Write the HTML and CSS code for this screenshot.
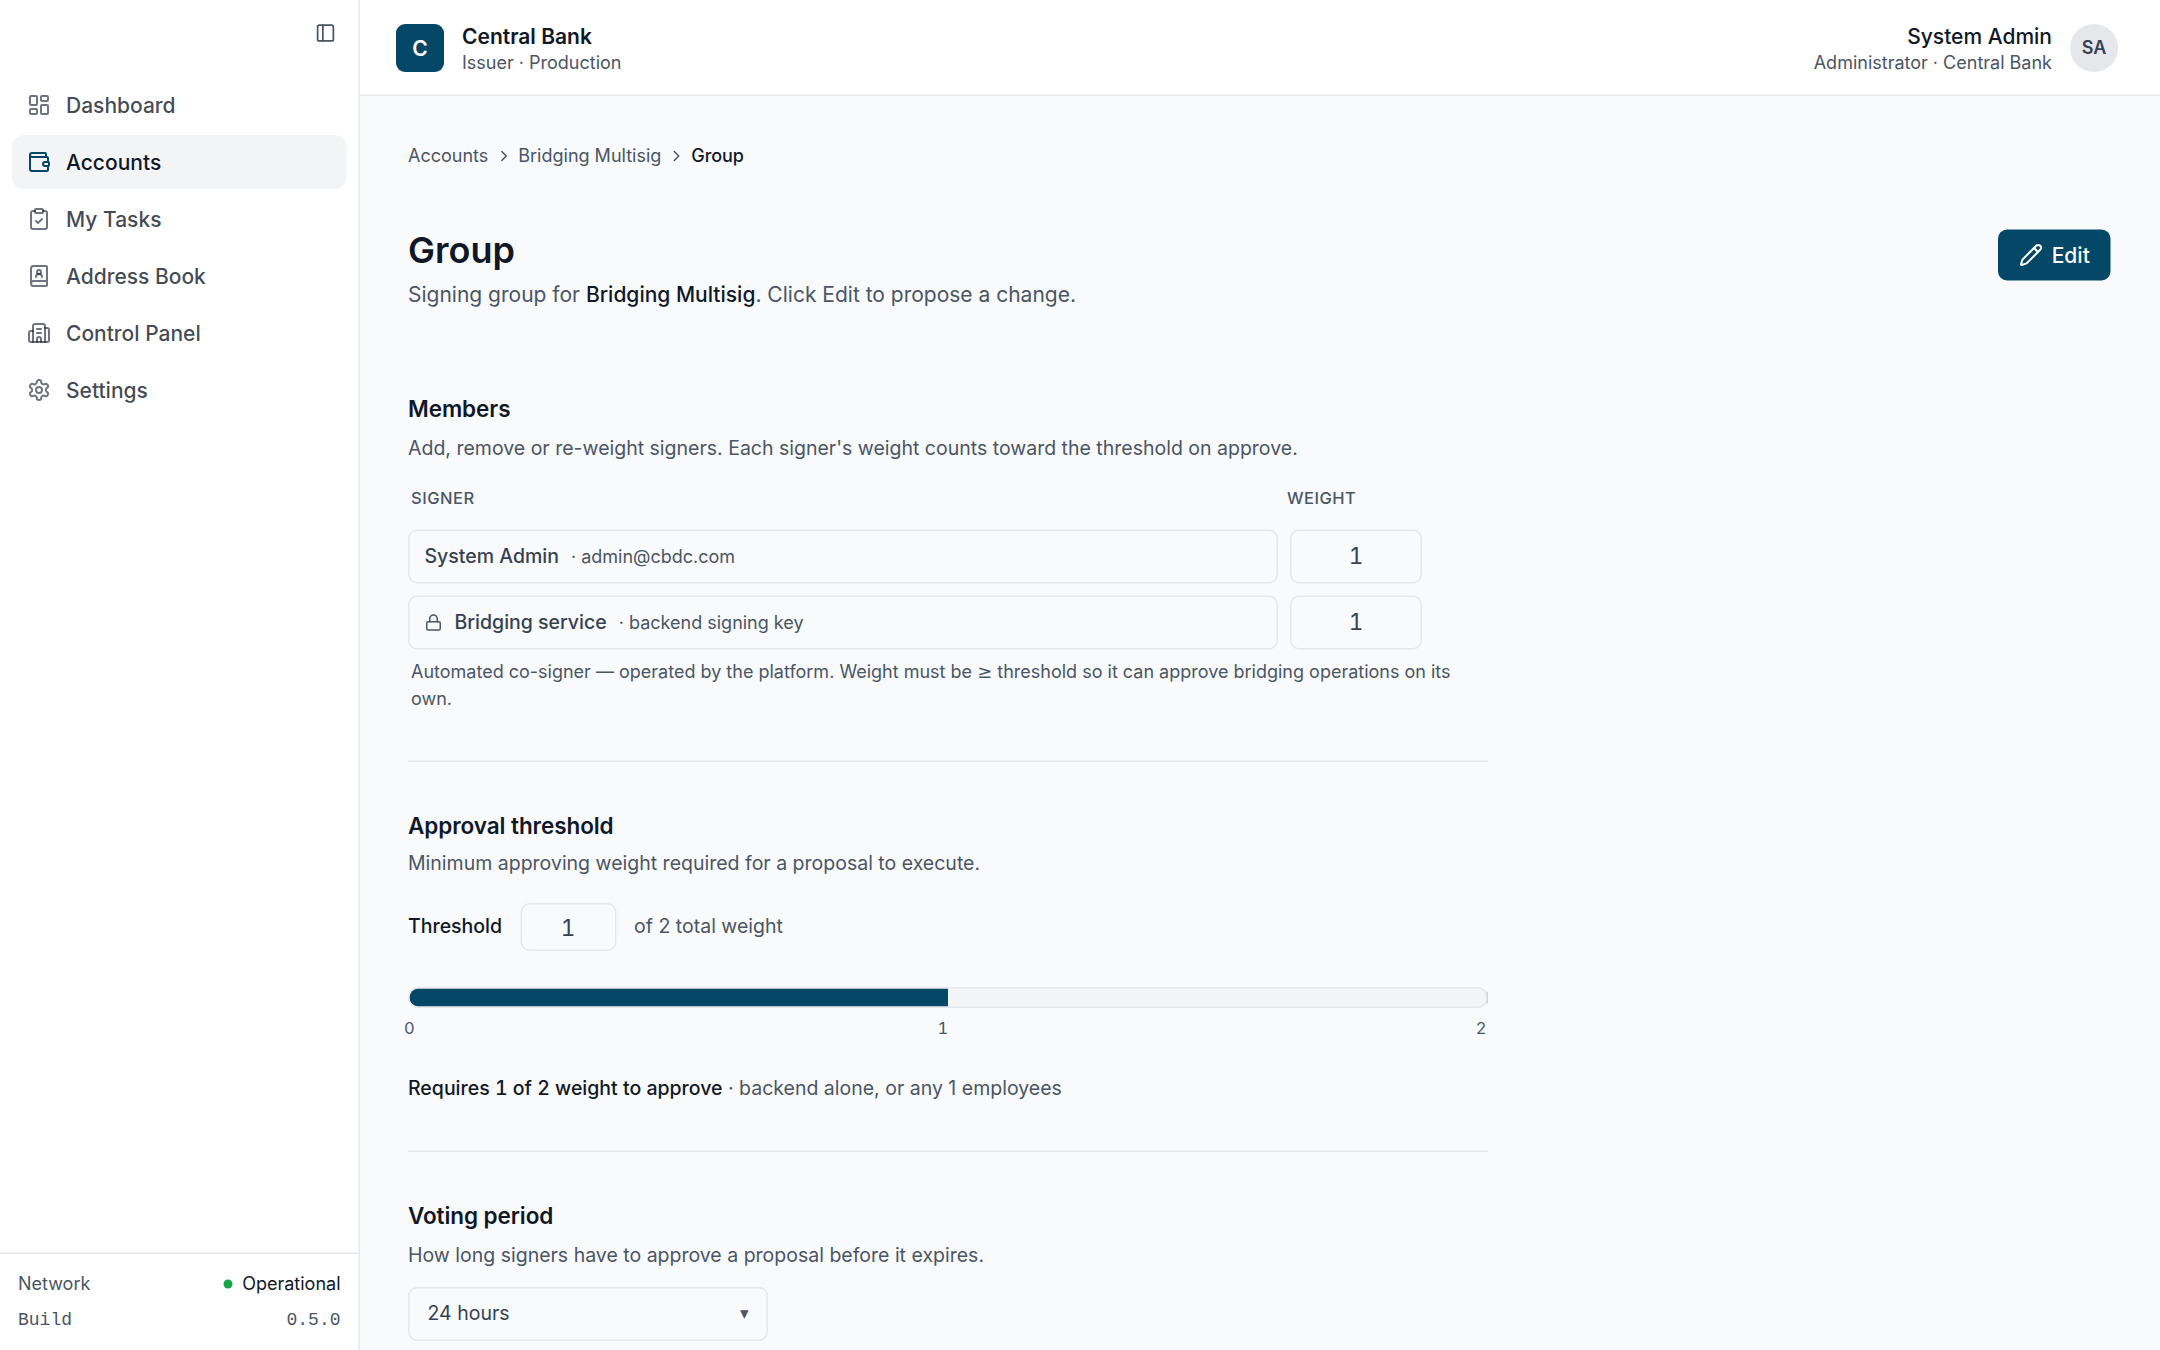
FILE: index.html
```
<!DOCTYPE html>
<html lang="en">
<head>
<meta charset="utf-8">
<title>Group</title>
<link rel="stylesheet" href="styles.css">
</head>
<body>
<div class="app">
  <aside class="sidebar">
    <div class="sidebar-top">
      <svg class="icon toggle" viewBox="0 0 24 24"><rect x="3" y="3" width="18" height="18" rx="2"/><path d="M9 3v18"/></svg>
    </div>
    <nav class="nav">
      <a class="nav-item"><svg class="icon" viewBox="0 0 24 24"><rect x="3" y="3" width="7" height="9" rx="1"/><rect x="14" y="3" width="7" height="5" rx="1"/><rect x="14" y="12" width="7" height="9" rx="1"/><rect x="3" y="16" width="7" height="5" rx="1"/></svg><span>Dashboard</span></a>
      <a class="nav-item active"><svg class="icon" viewBox="0 0 24 24"><path d="M19 7V4a1 1 0 0 0-1-1H5a2 2 0 0 0 0 4h15a1 1 0 0 1 1 1v4h-3a2 2 0 0 0 0 4h3a1 1 0 0 0 1-1v-2a1 1 0 0 0-1-1"/><path d="M3 5v14a2 2 0 0 0 2 2h15a1 1 0 0 0 1-1v-4"/></svg><span>Accounts</span></a>
      <a class="nav-item"><svg class="icon" viewBox="0 0 24 24"><rect x="8" y="2" width="8" height="4" rx="1"/><path d="M16 4h2a2 2 0 0 1 2 2v14a2 2 0 0 1-2 2H6a2 2 0 0 1-2-2V6a2 2 0 0 1 2-2h2"/><path d="m9 14 2 2 4-4"/></svg><span>My Tasks</span></a>
      <a class="nav-item"><svg class="icon" viewBox="0 0 24 24"><path d="M15 13a3 3 0 1 0-6 0"/><path d="M4 19.5v-15A2.5 2.5 0 0 1 6.500 2H19a1 1 0 0 1 1 1v18a1 1 0 0 1-1 1H6.500a1 1 0 0 1 0-5H20"/><circle cx="12" cy="8" r="2"/></svg><span>Address Book</span></a>
      <a class="nav-item"><svg class="icon" viewBox="0 0 24 24"><path d="M10 12h4"/><path d="M10 8h4"/><path d="M14 21v-3a2 2 0 0 0-4 0v3"/><path d="M6 10H4a2 2 0 0 0-2 2v7a2 2 0 0 0 2 2h16a2 2 0 0 0 2-2V9a2 2 0 0 0-2-2h-2"/><path d="M6 21V5a2 2 0 0 1 2-2h8a2 2 0 0 1 2 2v16"/></svg><span>Control Panel</span></a>
      <a class="nav-item"><svg class="icon" viewBox="0 0 24 24"><path d="M12.220 2h-.44a2 2 0 0 0-2 2v.18a2 2 0 0 1-1 1.730l-.43.25a2 2 0 0 1-2 0l-.15-.08a2 2 0 0 0-2.730.73l-.22.38a2 2 0 0 0 .73 2.730l.15.1a2 2 0 0 1 1 1.720v.51a2 2 0 0 1-1 1.740l-.15.09a2 2 0 0 0-.73 2.730l.22.38a2 2 0 0 0 2.730.73l.15-.08a2 2 0 0 1 2 0l.43.25a2 2 0 0 1 1 1.730V20a2 2 0 0 0 2 2h.44a2 2 0 0 0 2-2v-.18a2 2 0 0 1 1-1.730l.43-.25a2 2 0 0 1 2 0l.15.08a2 2 0 0 0 2.730-.73l.22-.39a2 2 0 0 0-.73-2.730l-.15-.08a2 2 0 0 1-1-1.740v-.5a2 2 0 0 1 1-1.740l.15-.09a2 2 0 0 0 .73-2.730l-.22-.38a2 2 0 0 0-2.730-.73l-.15.08a2 2 0 0 1-2 0l-.43-.25a2 2 0 0 1-1-1.730V4a2 2 0 0 0-2-2z"/><circle cx="12" cy="12" r="3"/></svg><span>Settings</span></a>
    </nav>
    <footer class="status">
      <div class="status-row"><span>Network</span><span class="status-value"><i class="dot"></i>Operational</span></div>
      <div class="status-row mono"><span>Build</span><span>0.5.0</span></div>
    </footer>
  </aside>
  <div class="main">
    <header class="topbar">
      <div class="org">
        <div class="org-logo">C</div>
        <div class="org-text"><div class="org-name">Central Bank</div><div class="sub">Issuer · Production</div></div>
      </div>
      <div class="user">
        <div class="user-text"><div class="user-name">System Admin</div><div class="sub">Administrator · Central Bank</div></div>
        <div class="avatar">SA</div>
      </div>
    </header>
    <main class="content">
      <nav class="crumbs">
        <span>Accounts</span>
        <svg class="icon chevron" viewBox="0 0 24 24"><path d="m9 18 6-6-6-6"/></svg>
        <span>Bridging Multisig</span>
        <svg class="icon chevron" viewBox="0 0 24 24"><path d="m9 18 6-6-6-6"/></svg>
        <span class="current">Group</span>
      </nav>
      <div class="page-head">
        <div>
          <h1>Group</h1>
          <p class="lead">Signing group for <strong>Bridging Multisig</strong>. Click Edit to propose a change.</p>
        </div>
        <button class="edit"><svg class="icon" viewBox="0 0 24 24"><path d="M21.174 6.812a1 1 0 0 0-3.986-3.987L3.842 16.174a2 2 0 0 0-.5.83l-1.321 4.352a.5.5 0 0 0 .623.622l4.353-1.320a2 2 0 0 0 .83-.497z"/><path d="m15 5 4 4"/></svg><span>Edit</span></button>
      </div>
      <section class="section members">
        <h2>Members</h2>
        <p class="desc">Add, remove or re-weight signers. Each signer's weight counts toward the threshold on approve.</p>
        <div class="grid-head"><span>SIGNER</span><span>WEIGHT</span></div>
        <div class="signer-row">
          <div class="field signer"><b>System Admin</b><small>· admin@cbdc.com</small></div>
          <div class="field num">1</div>
        </div>
        <div class="signer-row">
          <div class="field signer"><svg class="icon lock" viewBox="0 0 24 24"><rect x="3" y="11" width="18" height="11" rx="2"/><path d="M7 11V7a5 5 0 0 1 10 0v4"/></svg><b>Bridging service</b><small>· backend signing key</small></div>
          <div class="field num">1</div>
        </div>
        <p class="hint">Automated co-signer — operated by the platform. Weight must be <span class="math">≥</span> threshold so it can approve bridging operations on its own.</p>
      </section>
      <section class="section threshold">
        <h2>Approval threshold</h2>
        <p class="desc">Minimum approving weight required for a proposal to execute.</p>
        <div class="threshold-row"><label>Threshold</label><div class="field num">1</div><span>of 2 total weight</span></div>
        <div class="bar"><div class="bar-track"><div class="bar-fill"></div></div><div class="bar-end"></div></div>
        <div class="ticks"><span>0</span><span>1</span><span>2</span></div>
        <p class="summary"><strong>Requires 1 of 2 weight to approve</strong> · backend alone, or any 1 employees</p>
      </section>
      <section class="section voting">
        <h2>Voting period</h2>
        <p class="desc">How long signers have to approve a proposal before it expires.</p>
        <div class="field select"><span>24 hours</span><span class="caret">▾</span></div>
      </section>
    </main>
  </div>
</div>
</body>
</html>
```
FILE: styles.css
```
* { box-sizing: border-box; }
html { background: #f9fafb; }
body { margin: 0; height: 1350px; overflow: hidden; font-family: Inter, sans-serif; font-size: 13px; color: #4a5565; }
h1, h2, p { margin: 0; }
.icon { width: 16px; height: 16px; fill: none; stroke: currentColor; stroke-width: 2; stroke-linecap: round; stroke-linejoin: round; flex: none; }

/* 1440x900 layout shown at 150% */
.app { display: flex; width: 1440px; height: 900px; overflow: hidden; background: #f9fafb; transform: scale(1.5); transform-origin: 0 0; }

.sidebar { width: 240px; flex: none; background: #fff; border-right: 1px solid #e5e7eb; display: flex; flex-direction: column; }
.sidebar-top { height: 52px; padding: 15px 15px 0 0; display: flex; justify-content: flex-end; }
.toggle { width: 14px; height: 14px; }
.nav { flex: 1; padding: 0 8px; display: flex; flex-direction: column; gap: 2px; }
.nav-item { height: 36px; padding: 0 10px; display: flex; align-items: center; gap: 10px; border-radius: 8px; font-size: 14px; font-weight: 500; color: rgba(16, 24, 40, .8); }
.nav-item span { margin-bottom: 1.200px; }
.nav-item .icon { color: rgba(16, 24, 40, .6); }
.nav-item.active { background: #f3f4f6; color: #101828; }
.nav-item.active .icon { color: #054767; }
.status { border-top: 1px solid #e5e7eb; height: 65px; padding: 10.500px 12px 0; font-size: 12px; }
.status-row { display: flex; justify-content: space-between; line-height: 18px; margin-bottom: 6px; }
.status-value { display: flex; align-items: center; gap: 6px; color: #101828; }
.dot { width: 6px; height: 6px; border-radius: 50%; background: #16a34a; }
.mono { font-family: "Liberation Mono", monospace; }

.main { flex: 1; display: flex; flex-direction: column; min-width: 0; }
.topbar { height: 64px; flex: none; background: #fff; border-bottom: 1px solid #e5e7eb; display: flex; justify-content: space-between; align-items: center; padding: 1px 28px 0 24px; }
.org, .user { display: flex; align-items: center; gap: 12px; }
.org-logo { width: 32px; height: 32px; padding-bottom: 1px; border-radius: 6px; background: #054767; color: #fff; display: grid; place-items: center; font-weight: 600; font-size: 14px; }
.org-text, .user-text { margin-bottom: 1.500px; }
.org-name, .user-name { font-size: 14px; line-height: 20px; color: #101828; }
.org-name { font-weight: 600; }
.user-name { font-weight: 500; }
.user-text { text-align: right; }
.sub { font-size: 12px; line-height: 15px; }
.avatar { width: 32px; height: 32px; padding-bottom: 1px; border-radius: 50%; background: #e5e7eb; color: #364153; display: grid; place-items: center; font-weight: 600; font-size: 12px; }

.content { padding: 32px 33px 0 32px; }
.crumbs { display: flex; align-items: center; gap: 4px; height: 15px; line-height: 15px; font-size: 12px; }
.chevron { width: 12px; height: 12px; }
.current { color: #101828; font-weight: 500; letter-spacing: -.05px; }
.page-head { display: flex; justify-content: space-between; align-items: flex-start; margin-top: 41px; height: 109px; }
h1 { font-size: 24px; font-weight: 600; line-height: 30px; color: #101828; }
.lead { font-size: 14px; line-height: 21px; margin-top: 3.400px; }
strong { font-weight: 500; color: #101828; font-variant-numeric: tabular-nums; }
.edit { height: 34px; width: 75px; padding: 0; border: 0; border-radius: 6px; background: #054767; color: #fff; font: 500 14px Inter, sans-serif; display: flex; align-items: center; justify-content: center; gap: 6px; margin-top: 1px; }
.edit span { margin-bottom: 1.200px; }

.section { width: 720px; }
.members, .threshold { border-bottom: 1px solid #e5e7eb; }
h2 { font-size: 15px; font-weight: 600; line-height: 23px; letter-spacing: -.05px; color: #101828; }
.desc { line-height: 20px; }
.members { height: 247px; }
.members .desc { margin-top: 4.200px; }
.grid-head { display: flex; gap: 8px; padding: 0 2px; margin: 16.800px 0 14px; font-size: 11px; font-weight: 500; line-height: 14px; letter-spacing: .03em; }
.grid-head span:first-child { width: 576px; }
.signer-row { display: flex; gap: 8px; margin-bottom: 8px; }
.field { height: 36px; border: 1px solid #e5e7eb; border-radius: 6px; display: flex; align-items: center; color: #364153; }
.signer { width: 580px; padding: 0 10px; }
.signer b, .signer small { margin-bottom: 1.200px; }
.signer b { font-weight: 500; }
.signer small { font-size: 12px; margin-left: 8px; color: #4a5565; }
.lock { width: 12px; height: 12px; margin-right: 8px; color: #4a5565; }
.num { width: 88px; padding-bottom: .5px; justify-content: center; font-size: 15px; font-variant-numeric: tabular-nums; }
.hint { padding: 0 2px; margin-top: -2px; font-size: 12px; line-height: 18px; }
.math { font-family: "DejaVu Sans", sans-serif; line-height: 1; }

.threshold { height: 260px; padding-top: 31px; }
.threshold .desc { margin-top: 3px; }
.threshold-row { display: flex; align-items: center; gap: 12px; margin-top: 17px; }
.threshold-row label, .threshold-row span { margin-bottom: 1.200px; }
.threshold-row label { font-weight: 500; color: #101828; }
.threshold-row .num { width: 64px; height: 32px; padding-bottom: 0; }
.bar { position: relative; margin-top: 24px; }
.bar-track { height: 14px; border: 1px solid #e5e7eb; border-radius: 7px; background: #f3f4f6; overflow: hidden; }
.bar-fill { width: 50%; height: 12px; background: #054767; }
.bar-end { position: absolute; right: 0; top: 3px; width: 1px; height: 8px; background: #d1d5dc; }
.ticks { display: flex; justify-content: space-between; font-size: 11px; line-height: 15px; margin: 6px 1px 0 -2.700px; font-variant-numeric: tabular-nums; }
.ticks span:nth-child(2) { margin-right: 3.300px; }
.summary { margin-top: 22.400px; line-height: 20px; }

.voting { padding-top: 31px; }
.voting .desc { margin-top: 4.400px; }
.select { width: 240px; margin-top: 11.600px; padding: 0 12px; justify-content: space-between; }
.select span { margin-bottom: 1.200px; }
.caret { font-size: 11px; color: #4a5565; }
```
